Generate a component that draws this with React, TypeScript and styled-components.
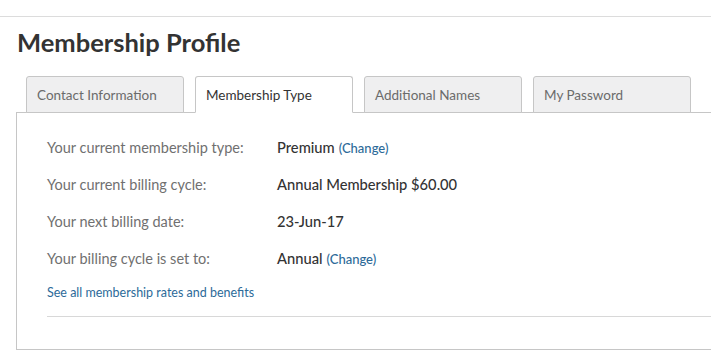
import React from 'react';
import styled, {createGlobalStyle} from 'styled-components';

const GlobalStyle = createGlobalStyle`
  html, body {
    margin: 0;
    padding: 0;
    background: #fff;
    font-family: Lato, "Open Sans", sans-serif;
    overflow: hidden;
  }
`;

const Page = styled.div`
  width: 711px;
  height: 358px;
  border-top: 1px solid #dcdcdc;
  margin-top: 16px;
  box-sizing: border-box;
`;

const Title = styled.h1`
  margin: 0;
  padding: 10px 0 0 17px;
  font-size: 25.5px;
  line-height: 30px;
  font-weight: 700;
  color: #333;
`;

const Tabs = styled.div`
  display: flex;
  gap: 11px;
  padding: 19px 0 0 26px;
  margin-bottom: -1px;
  position: relative;
  z-index: 1;
`;

const Tab = styled.div<{ $active?: boolean }>`
  width: 158px;
  height: 37px;
  box-sizing: border-box;
  border: 1px solid #c6c6c6;
  border-bottom-color: ${p => (p.$active ? '#fff' : '#c6c6c6')};
  border-radius: 3px 3px 0 0;
  background: ${p => (p.$active ? '#fff' : '#efeff0')};
  color: ${p => (p.$active ? '#333' : '#6b6b6b')};
  font-size: 13.5px;
  line-height: 36px;
  padding-left: 10px;
`;

const Panel = styled.div`
  margin-left: 16px;
  height: 238px;
  box-sizing: border-box;
  border: 1px solid #c6c6c6;
  border-right: none;
  padding: 25px 0 0 30px;
`;

const Row = styled.div`
  display: flex;
  align-items: baseline;
  height: 37px;
  font-size: 14.5px;
`;

const Label = styled.div`
  width: 230px;
  color: #707070;
`;

const Value = styled.div`
  color: #333;
  font-weight: 500;
  font-size: 14.7px;
`;

const ChangeLink = styled.a`
  color: #2c6a99;
  font-size: 13px;
  margin-left: 4px;
  text-decoration: none;
`;

const RatesLink = styled.a`
  display: block;
  color: #2c6a99;
  font-size: 12.5px;
  margin-top: -1px;
  text-decoration: none;
`;

const Divider = styled.div`
  border-top: 1px solid #d8d8d8;
  margin-top: 16px;
`;

const rows: { label: string; value: string; change?: boolean }[] = [
  {label: 'Your current membership type:', value: 'Premium', change: true},
  {label: 'Your current billing cycle:', value: 'Annual Membership $60.00'},
  {label: 'Your next billing date:', value: '23-Jun-17'},
  {label: 'Your billing cycle is set to:', value: 'Annual', change: true},
];

const tabs = ['Contact Information', 'Membership Type', 'Additional Names', 'My Password'];

export default function App() {
  return (
    <>
      <GlobalStyle/>
      <Page>
        <Title>Membership Profile</Title>
        <Tabs>
          {tabs.map(t => <Tab key={t} $active={t === 'Membership Type'}>{t}</Tab>)}
        </Tabs>
        <Panel>
          {rows.map(r => (
            <Row key={r.label}>
              <Label>{r.label}</Label>
              <Value>
                {r.value}
                {r.change && <ChangeLink href="#">(Change)</ChangeLink>}
              </Value>
            </Row>
          ))}
          <RatesLink href="#">See all membership rates and benefits</RatesLink>
          <Divider/>
        </Panel>
      </Page>
    </>
  );
}
